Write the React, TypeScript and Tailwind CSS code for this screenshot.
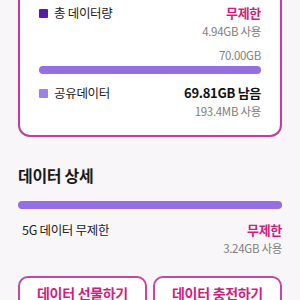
const FONT = { fontFamily: '"Noto Sans CJK KR", "Noto Sans", sans-serif' };

const UsageRow = ({ dot, label, value, valueClass, sub }: { dot: string; label: string; value: string; valueClass: string; sub: string }) => (
  <>
    <div className="flex h-[16px] items-center justify-between">
      <div className="flex items-center gap-[6px]">
        <span className={`h-[9px] w-[9px] rounded-[1px] ${dot}`} />
        <span className="text-[12.5px] leading-[16px] tracking-[-0.3px] text-[#222]">{label}</span>
      </div>
      <span className={`text-[13px] font-bold leading-[16px] tracking-[-0.3px] ${valueClass}`}>{value}</span>
    </div>
    <div className="mt-[3px] h-[14px] text-right text-[11.5px] leading-[14px] tracking-[-0.3px] text-[#808080]">{sub}</div>
  </>
);

export default function App() {
  return (
    <div className="h-[300px] w-[300px] overflow-hidden bg-[#f8f6f9]" style={FONT}>
      <div className="mx-[18px] rounded-b-[12px] border-2 border-t-0 border-[#c43c9e] bg-white px-[19px] pb-[17px] pt-[5px]">
        <UsageRow dot="bg-[#5a1aa3]" label="총 데이터량" value="무제한" valueClass="text-[#cf1f7c]" sub="4.94GB 사용" />
        <div className="mt-[10px] h-[14px] text-right text-[11.5px] leading-[14px] tracking-[-0.3px] text-[#808080]">70.00GB</div>
        <div className="mt-[4px] h-[8px] rounded-full bg-[#946ee2]" />
        <div className="mt-[11px]">
          <UsageRow dot="bg-[#9d80e8]" label="공유데이터" value="69.81GB 남음" valueClass="text-[#111]" sub="193.4MB 사용" />
        </div>
      </div>

      <div className="mx-[18px]">
        <h2 className="mt-[27px] text-[16px] font-bold leading-[22px] tracking-[-0.3px] text-[#1a1a1a]">데이터 상세</h2>
        <div className="mt-[15px] h-[8px] rounded-full bg-[#946ee2]" />
        <div className="mt-[13px] flex h-[16px] items-center justify-between">
          <span className="pl-[4px] text-[12.5px] leading-[16px] tracking-[-0.3px] text-[#222]">5G 데이터 무제한</span>
          <span className="text-[13px] font-bold leading-[16px] tracking-[-0.3px] text-[#cf1f7c]">무제한</span>
        </div>
        <div className="mt-[3px] h-[14px] text-right text-[11.5px] leading-[14px] tracking-[-0.3px] text-[#808080]">3.24GB 사용</div>

        <div className="mt-[21px] grid grid-cols-2 gap-[6px]">
          <button type="button" className="h-[40px] rounded-[10px] border-2 border-[#c4489c] bg-white pb-[6px] text-[14px] font-semibold tracking-[-0.3px] text-[#cf1f7c]">
            데이터 선물하기
          </button>
          <button type="button" className="h-[40px] rounded-[10px] border-2 border-[#c4489c] bg-white pb-[6px] text-[14px] font-semibold tracking-[-0.3px] text-[#cf1f7c]">
            데이터 충전하기
          </button>
        </div>
      </div>
    </div>
  );
}
